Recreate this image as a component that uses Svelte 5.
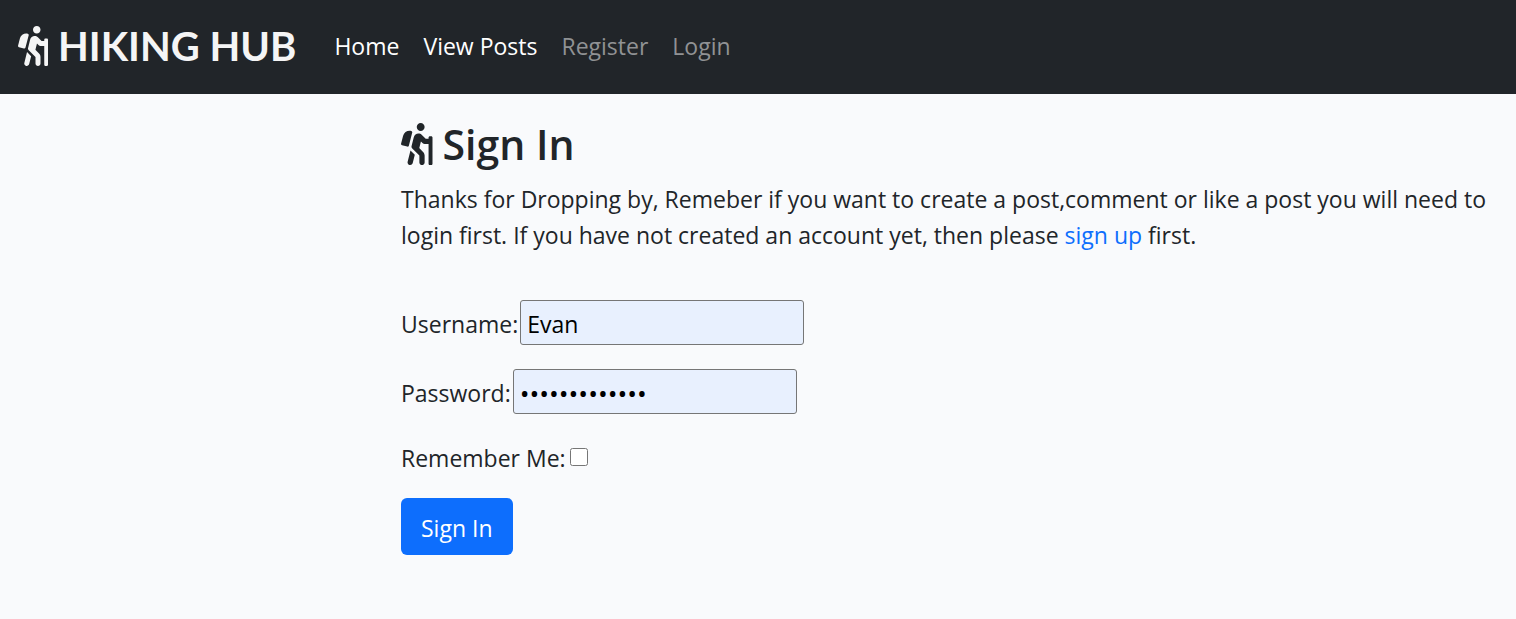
<script>
  let username = $state('Evan');
  let password = $state('trailblazer12');
  let remember = $state(false);

  const links = [
    { label: 'Home', active: true },
    { label: 'View Posts', active: true },
    { label: 'Register', active: false },
    { label: 'Login', active: false }
  ];
</script>

{#snippet hiker()}
  <svg class="hiker" viewBox="0 0 384 512" fill="currentColor" aria-hidden="true">
    <path d="M80.95 472.23c-4.28 17.16 6.14 34.53 23.28 38.81 2.61.66 5.22.95 7.8.95 14.33 0 27.37-9.7 31.02-24.23l25.24-100.97-52.78-52.78-34.56 138.22zm14.89-196.12L137 117c2.19-8.42-3.14-16.95-11.92-19.06-43.88-10.52-88.35 15.07-99.32 57.17L.49 253.24c-2.19 8.42 3.14 16.95 11.92 19.06l63.56 15.25c8.79 2.1 17.68-3.02 19.87-11.44zM368 160h-16c-8.84 0-16 7.16-16 16v16h-34.75l-46.78-46.78C243.38 134.11 228.61 128 212.91 128c-27.02 0-50.47 18.3-57.03 44.52l-26.92 107.72a32.012 32.012 0 0 0 8.42 30.39L224 397.25V480c0 17.67 14.33 32 32 32s32-14.33 32-32v-82.75c0-17.09-6.66-33.16-18.75-45.25l-46.82-46.82c.15-.5.49-.89.62-1.41l19.89-79.57 22.43 22.43c6 6 14.14 9.38 22.62 9.38h48v240c0 8.84 7.16 16 16 16h16c8.84 0 16-7.16 16-16V176c.01-8.84-7.15-16-15.99-16zM240 96c26.51 0 48-21.49 48-48S266.51 0 240 0s-48 21.49-48 48 21.49 48 48 48z" />
  </svg>
{/snippet}

<header class="navbar">
  <a class="brand" href="#home">{@render hiker()}<span>HIKING HUB</span></a>
  <nav>
    {#each links as link}
      <a class:active={link.active} href="#{link.label}">{link.label}</a>
    {/each}
  </nav>
</header>

<main>
  <h1>{@render hiker()}<span>Sign In</span></h1>
  <p>
    Thanks for Dropping by, Remeber if you want to create a post,comment or like a post you will
    need to login first. If you have not created an account yet, then please
    <a href="#signup">sign up</a> first.
  </p>
  <form onsubmit={(e) => e.preventDefault()}>
    <div class="field">
      <label for="username">Username:</label>
      <input class="text" id="username" type="text" bind:value={username} />
    </div>
    <div class="field">
      <label for="password">Password:</label>
      <input class="text" id="password" type="password" bind:value={password} />
    </div>
    <div class="field check">
      <label for="remember">Remember Me:</label>
      <input id="remember" type="checkbox" bind:checked={remember} />
    </div>
    <button type="submit">Sign In</button>
  </form>
</main>

<style>
  :global(body) {
    margin: 0;
    background: #f9fafc;
    color: #212529;
    font-family: 'Segoe UI', 'Open Sans', sans-serif;
    font-size: 23px;
    line-height: 36px;
  }

  a {
    text-decoration: none;
  }

  .navbar {
    display: flex;
    align-items: center;
    gap: 38px;
    padding: 16px 18px 18px;
    background: #212529;
  }

  .brand {
    display: flex;
    align-items: center;
    gap: 10px;
    color: #f5f5f5;
    font: 700 40px/60px Lato, sans-serif;
    white-space: nowrap;
  }

  .hiker {
    display: block;
    flex: none;
    height: 40px;
  }

  nav {
    display: flex;
    gap: 24px;
  }

  nav a {
    color: #909294;
  }

  nav a.active {
    color: #fff;
  }

  main {
    margin-left: 25%;
    padding: 24px 22px;
  }

  h1 {
    display: flex;
    align-items: center;
    gap: 10px;
    margin: 0 0 11px;
    font-size: 41px;
    font-weight: 600;
    line-height: 52px;
  }

  h1 .hiker {
    height: 42px;
  }

  p {
    margin: 0 0 47px;
  }

  p a {
    color: #0d6efd;
  }

  .field {
    display: flex;
    align-items: center;
    gap: 2px;
    margin-bottom: 24px;
  }

  label {
    padding-top: 2px;
  }

  .text {
    box-sizing: border-box;
    width: 284px;
    height: 45px;
    padding: 4px 6px 2px;
    border: 1px solid #767676;
    border-radius: 3px;
    background: #e8f0fe;
    color: #000;
    font: inherit;
  }

  .text[type='password'] {
    font-size: 26px;
  }

  .check {
    gap: 4px;
    margin-bottom: 22px;
  }

  .check input {
    width: 18px;
    height: 18px;
    margin: 0;
  }

  button {
    padding: 12px 20px 8px;
    border: 0;
    border-radius: 6px;
    background: #0d6efd;
    color: #fff;
    font: inherit;
    line-height: 37px;
  }
</style>
